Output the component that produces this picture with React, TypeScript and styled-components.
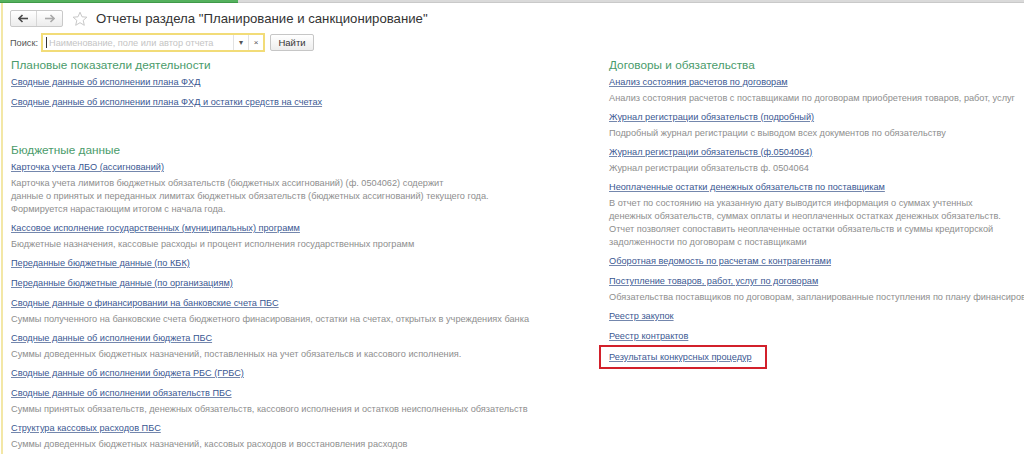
import * as React from "react";
import styled, { createGlobalStyle } from "styled-components";

const GlobalStyle = createGlobalStyle`
  html, body {
    margin: 0;
    padding: 0;
    background: #fff;
  }
  body {
    font-family: "Liberation Sans", Arial, sans-serif;
    width: 1024px;
    height: 454px;
    overflow: hidden;
  }
`;

const TopStrip = styled.div`
  display: flex;
  height: 3px;
`;

const TabPart = styled.div<{ $active?: boolean }>`
  width: ${p => (p.$active ? "238px" : "auto")};
  flex: ${p => (p.$active ? "none" : "1")};
  background: ${p => (p.$active ? "#55b15e" : "#dadada")};
  border-bottom: 1px solid ${p => (p.$active ? "#3f9a49" : "#c9c9c9")};
`;

const Form = styled.div`
  margin-left: 1px;
  border-left: 2px solid #f3e7a6;
  height: 451px;
  padding: 7px 0 0 7px;
  box-sizing: border-box;
  overflow: hidden;
`;

const TitleRow = styled.div`
  display: flex;
  align-items: center;
  height: 17px;
`;

const NavGroup = styled.div`
  display: flex;
  height: 17px;
  border: 1px solid #c9c9c9;
  border-radius: 2px;
  background: linear-gradient(#ffffff, #ececec);
  box-sizing: border-box;
`;

const NavButton = styled.div<{ $divider?: boolean }>`
  width: 25px;
  display: flex;
  align-items: center;
  justify-content: center;
  border-left: ${p => (p.$divider ? "1px solid #d6d6d6" : "none")};
`;

const StarBox = styled.div`
  margin-left: 9px;
  width: 16px;
  height: 16px;
  display: flex;
`;

const Title = styled.h1`
  margin: 0 0 0 8px;
  font-size: 13.2px;
  font-weight: normal;
  color: #333;
  white-space: nowrap;
`;

const SearchRow = styled.div`
  display: flex;
  align-items: center;
  margin-top: 6px;
  height: 19px;
`;

const SearchLabel = styled.span`
  font-size: 9.2px;
  color: #555;
  margin-right: 3px;
`;

const SearchField = styled.div`
  display: flex;
  align-items: stretch;
  width: 224px;
  height: 19px;
  border: 2px solid #f2dc78;
  box-sizing: border-box;
  background: #fff;
`;

const SearchInput = styled.div`
  flex: 1;
  display: flex;
  align-items: center;
  font-size: 9.2px;
  color: #c4c4c4;
  padding-left: 3px;
  white-space: nowrap;
  overflow: hidden;
  &::before {
    content: "";
    width: 1px;
    height: 11px;
    background: #333;
    margin-right: 2px;
  }
`;

const FieldButton = styled.div`
  width: 14px;
  display: flex;
  align-items: center;
  justify-content: center;
  border-left: 1px solid #e2e2e2;
  font-size: 8px;
  color: #555;
`;

const FindButton = styled.div`
  margin-left: 5px;
  width: 44px;
  height: 17px;
  display: flex;
  align-items: center;
  justify-content: center;
  border: 1px solid #c6c6c6;
  border-radius: 2px;
  background: linear-gradient(#ffffff, #ededed);
  box-sizing: border-box;
  font-size: 9.5px;
  color: #333;
`;

const Columns = styled.div`
  display: grid;
  grid-template-columns: 598px 1fr;
  margin-top: 5px;
  margin-left: 1px;
`;

const Column = styled.div`
  min-width: 0;
  white-space: nowrap;
`;

const Section = styled.section`
  margin-bottom: 32px;
`;

const SectionTitle = styled.h2`
  margin: 0 0 1px;
  font-size: 11.8px;
  line-height: 16px;
  font-weight: normal;
  color: #4a9b6b;
`;

const Item = styled.div<{ $marked?: boolean }>`
  margin-bottom: 4px;
  width: fit-content;
  ${p =>
    p.$marked
      ? `
    margin: -3px 0 0 -10px;
    padding: 2px 13px 2px 8px;
    border: 2px solid #d2202b;
  `
      : ""}
`;

const ReportLink = styled.a`
  display: block;
  font-size: 9.2px;
  line-height: 16px;
  color: #3a5792;
  text-decoration: underline;
  text-decoration-color: #7487ad;
  cursor: pointer;
`;

const Description = styled.div`
  margin-top: 2px;
  font-size: 9.2px;
  line-height: 13px;
  color: #8e8e8e;
`;

type Report = { title: string; desc?: string[]; marked?: boolean };

const planned: Report[] = [
  { title: "Сводные данные об исполнении плана ФХД" },
  { title: "Сводные данные об исполнении плана ФХД и остатки средств на счетах" },
];

const budget: Report[] = [
  {
    title: "Карточка учета ЛБО (ассигнований)",
    desc: [
      "Карточка учета лимитов бюджетных обязательств (бюджетных ассигнований) (ф. 0504062) содержит",
      "данные о принятых и переданных лимитах бюджетных обязательств (бюджетных ассигнований) текущего года.",
      "Формируется нарастающим итогом с начала года.",
    ],
  },
  {
    title: "Кассовое исполнение государственных (муниципальных) программ",
    desc: ["Бюджетные назначения, кассовые расходы и процент исполнения государственных программ"],
  },
  { title: "Переданные бюджетные данные (по КБК)" },
  { title: "Переданные бюджетные данные (по организациям)" },
  {
    title: "Сводные данные о финансировании на банковские счета ПБС",
    desc: [
      "Суммы полученного на банковские счета бюджетного финасирования, остатки на счетах, открытых в учреждениях банка",
    ],
  },
  {
    title: "Сводные данные об исполнении бюджета ПБС",
    desc: ["Суммы доведенных бюджетных назначений, поставленных на учет обязательсв и кассового исполнения."],
  },
  { title: "Сводные данные об исполнении бюджета РБС (ГРБС)" },
  {
    title: "Сводные данные об исполнении обязательств ПБС",
    desc: [
      "Суммы принятых обязательств, денежных обязательств, кассового исполнения и остатков неисполненных обязательств",
    ],
  },
  {
    title: "Структура кассовых расходов ПБС",
    desc: ["Суммы доведенных бюджетных назначений, кассовых расходов и восстановления расходов"],
  },
];

const contracts: Report[] = [
  {
    title: "Анализ состояния расчетов по договорам",
    desc: ["Анализ состояния расчетов с поставщиками по договорам приобретения товаров, работ, услуг"],
  },
  {
    title: "Журнал регистрации обязательств (подробный)",
    desc: ["Подробный журнал регистрации с выводом всех документов по обязательству"],
  },
  {
    title: "Журнал регистрации обязательств (ф.0504064)",
    desc: ["Журнал регистрации обязательств ф. 0504064"],
  },
  {
    title: "Неоплаченные остатки денежных обязательств по поставщикам",
    desc: [
      "В отчет по состоянию на указанную дату выводится информация о суммах учтенных",
      "денежных обязательств, суммах оплаты и неоплаченных остатках денежных обязательств.",
      "Отчет позволяет сопоставить неоплаченные остатки обязательств и суммы кредиторской",
      "задолженности по договорам с поставщиками",
    ],
  },
  { title: "Оборотная ведомость по расчетам с контрагентами" },
  {
    title: "Поступление товаров, работ, услуг по договорам",
    desc: [
      "Обязательства поставщиков по договорам, запланированные поступления по плану финансирования",
    ],
  },
  { title: "Реестр закупок" },
  { title: "Реестр контрактов" },
  { title: "Результаты конкурсных процедур", marked: true },
];

const ReportList = ({ items }: { items: Report[] }) => (
  <>
    {items.map(r => (
      <Item key={r.title} $marked={r.marked}>
        <ReportLink>{r.title}</ReportLink>
        {r.desc && (
          <Description>
            {r.desc.map(line => (
              <div key={line}>{line}</div>
            ))}
          </Description>
        )}
      </Item>
    ))}
  </>
);

const Arrow = ({ dir, color }: { dir: "left" | "right"; color: string }) => (
  <svg width="11" height="9" viewBox="0 0 11 9">
    <g transform={dir === "right" ? "translate(11 0) scale(-1 1)" : undefined}>
      <path d="M1 4.5H10" stroke={color} strokeWidth="1.6" />
      <path d="M4.5 1L1 4.5L4.5 8" fill="none" stroke={color} strokeWidth="1.6" />
    </g>
  </svg>
);

const Star = () => (
  <svg width="16" height="16" viewBox="0 0 16 16">
    <path
      d="M8 1.2L10 5.8L14.9 6.2L11.2 9.4L12.3 14.3L8 11.7L3.7 14.3L4.8 9.4L1.1 6.2L6 5.8Z"
      fill="#fff"
      stroke="#c8c8c8"
      strokeWidth="1"
      strokeLinejoin="round"
    />
  </svg>
);

export default function App() {
  return (
    <>
      <GlobalStyle />
      <TopStrip>
        <TabPart $active />
        <TabPart />
      </TopStrip>
      <Form>
        <TitleRow>
          <NavGroup>
            <NavButton>
              <Arrow dir="left" color="#4a4a4a" />
            </NavButton>
            <NavButton $divider>
              <Arrow dir="right" color="#a9a9a9" />
            </NavButton>
          </NavGroup>
          <StarBox>
            <Star />
          </StarBox>
          <Title>Отчеты раздела "Планирование и санкционирование"</Title>
        </TitleRow>
        <SearchRow>
          <SearchLabel>Поиск:</SearchLabel>
          <SearchField>
            <SearchInput>Наименование, поле или автор отчета</SearchInput>
            <FieldButton>▾</FieldButton>
            <FieldButton>×</FieldButton>
          </SearchField>
          <FindButton>Найти</FindButton>
        </SearchRow>
        <Columns>
          <Column>
            <Section>
              <SectionTitle>Плановые показатели деятельности</SectionTitle>
              <ReportList items={planned} />
            </Section>
            <Section>
              <SectionTitle>Бюджетные данные</SectionTitle>
              <ReportList items={budget} />
            </Section>
          </Column>
          <Column>
            <Section>
              <SectionTitle>Договоры и обязательства</SectionTitle>
              <ReportList items={contracts} />
            </Section>
          </Column>
        </Columns>
      </Form>
    </>
  );
}
